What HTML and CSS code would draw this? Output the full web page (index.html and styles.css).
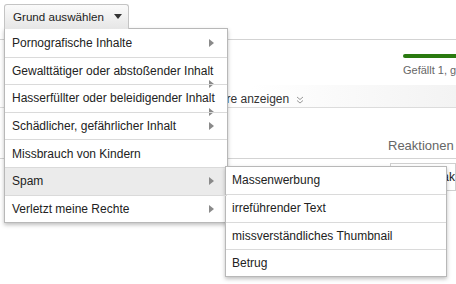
FILE: index.html
```html
<!DOCTYPE html>
<html lang="de">
<head>
  <meta charset="UTF-8" />
  <meta name="viewport" content="width=device-width, initial-scale=1.0" />
  <title>Grund auswählen</title>
  <link rel="stylesheet" href="styles.css">
</head>
<body>
  <div class="page">
    <div class="header"></div>
    <div class="stats">
      <div class="rating">
        <div class="bar"></div>
        <div class="likes">Gefällt 1, gefällt mir nicht 0</div>
      </div>
    </div>
    <div class="more">
      <span>Weitere anzeigen</span>
      <svg class="chevrons" width="8" height="8" viewBox="0 0 8 8">
        <path d="M1 1 L4 3.5 L7 1 M1 4.5 L4 7 L7 4.5" fill="none" stroke="#999" stroke-width="1"/>
      </svg>
    </div>
    <div class="tabs">
      <span class="tab">Reaktionen</span>
    </div>
    <div class="panel">Reaktionen</div>
  </div>

  <div class="picker">
    <button class="picker-button">
      Grund auswählen
      <span class="caret"></span>
    </button>
    <ul class="menu">
      <li class="item">
        <span class="label">Pornografische Inhalte</span>
        <span class="arrow"></span>
      </li>
      <li class="item wrapped">
        <span class="label">Gewalttätiger oder abstoßender Inhalt</span>
        <span class="arrow"></span>
      </li>
      <li class="item wrapped">
        <span class="label">Hasserfüllter oder beleidigender Inhalt</span>
        <span class="arrow"></span>
      </li>
      <li class="item">
        <span class="label">Schädlicher, gefährlicher Inhalt</span>
        <span class="arrow"></span>
      </li>
      <li class="item">
        <span class="label">Missbrauch von Kindern</span>
      </li>
      <li class="item active">
        <span class="label">Spam</span>
        <span class="arrow"></span>
        <ul class="submenu">
          <li class="subitem">Massenwerbung</li>
          <li class="subitem">irreführender Text</li>
          <li class="subitem">missverständliches Thumbnail</li>
          <li class="subitem">Betrug</li>
        </ul>
      </li>
      <li class="item">
        <span class="label">Verletzt meine Rechte</span>
        <span class="arrow"></span>
      </li>
    </ul>
  </div>
</body>
</html>
```

FILE: styles.css
```css
body {
  margin: 0;
  background-color: white;
  font-family: "Liberation Sans", Arial, sans-serif;
  font-size: 13px;
  color: #222;
  overflow: hidden;
}

/* page behind the menu */

.header {
  height: 39px;
  border-bottom: 1px solid #d3d3d3;
}

.stats {
  height: 45px;
}

.rating {
  margin-left: 403px;
  padding-top: 14px;
}

.bar {
  height: 4px;
  background-color: #2a7a10;
  border-radius: 2px 0 0 2px;
}

.likes {
  margin-top: 6px;
  font-size: 11px;
  line-height: 13px;
  color: #666;
  white-space: nowrap;
  overflow: hidden;
}

.more {
  box-sizing: border-box;
  height: 23px;
  padding: 6px 0 0 196px;
  font-size: 12px;
  line-height: 16px;
  color: #333;
  white-space: nowrap;
  background: linear-gradient(to right, #fff 55%, #f3f3f3);
  border-bottom: 1px solid #dcdcdc;
}

.chevrons {
  margin-left: 3px;
  vertical-align: -1px;
}

.tabs {
  box-sizing: border-box;
  height: 51px;
  padding: 30px 0 0 388px;
  line-height: 16px;
  border-bottom: 1px solid #d3d3d3;
}

.tab {
  color: #666;
}

.panel {
  box-sizing: border-box;
  margin: 4px 0 0 390px;
  height: 28px;
  padding: 6px 0 0 36px;
  border: 1px solid #d0d0d0;
  font-size: 12px;
  white-space: nowrap;
  overflow: hidden;
}

/* reason picker */

.picker {
  position: absolute;
  top: 4px;
  left: 4px;
}

.picker-button {
  display: flex;
  align-items: center;
  box-sizing: border-box;
  height: 25px;
  width: 125px;
  margin: 0;
  padding: 0 0 2px 8px;
  font-family: inherit;
  font-size: 11.6px;
  color: #222;
  white-space: nowrap;
  background: linear-gradient(#fafafa, #e6e6e6);
  border: 1px solid #c4c4c4;
  border-bottom: none;
  border-radius: 3px 3px 0 0;
  position: relative;
  z-index: 2;
}

.caret {
  margin-left: 10px;
  width: 0;
  height: 0;
  border-left: 4.5px solid transparent;
  border-right: 4.5px solid transparent;
  border-top: 5px solid #333;
}

.menu {
  list-style: none;
  margin: -1px 0 0;
  padding: 0;
  width: 224px;
  box-sizing: border-box;
  font-size: 12px;
  background-color: white;
  border: 1px solid #b8b8b8;
  box-shadow: 0 2px 4px rgba(0, 0, 0, 0.25);
  position: relative;
  z-index: 1;
}

.item {
  display: flex;
  align-items: center;
  box-sizing: border-box;
  height: 27.6px;
  padding: 0 13px 0 7px;
  border-top: 1px solid #dadada;
  white-space: nowrap;
  position: relative;
}

.item:first-child {
  border-top: none;
}

.label {
  flex: 1;
  min-width: 0;
}

.arrow {
  flex-shrink: 0;
  width: 0;
  height: 0;
  border-top: 4px solid transparent;
  border-bottom: 4px solid transparent;
  border-left: 5px solid #8a8a8a;
}

.wrapped .arrow {
  align-self: flex-end;
  margin-bottom: -4px;
}

.active {
  background-color: #ebebeb;
}

.submenu {
  list-style: none;
  margin: 0;
  padding: 0;
  position: absolute;
  top: -2px;
  left: 220px;
  width: 222px;
  box-sizing: border-box;
  background-color: white;
  border: 1px solid #b8b8b8;
  box-shadow: 0 2px 4px rgba(0, 0, 0, 0.25);
}

.subitem {
  box-sizing: border-box;
  height: 27.3px;
  padding-left: 6px;
  line-height: 26px;
  border-top: 1px solid #dadada;
}

.subitem:first-child {
  border-top: none;
}
```
